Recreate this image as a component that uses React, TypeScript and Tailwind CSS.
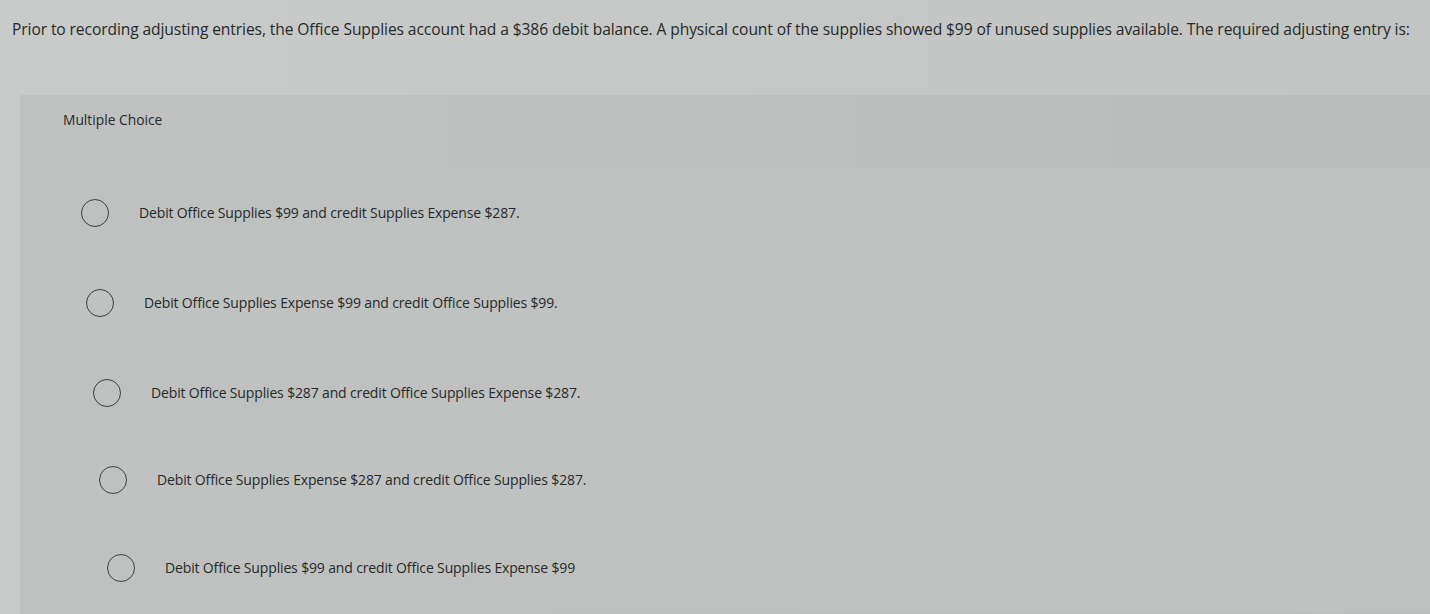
import React from "react";

const options = [
  { text: "Debit Office Supplies $99 and credit Supplies Expense $287.", indent: "ml-[61px]", h: "h-[90px]" },
  { text: "Debit Office Supplies Expense $99 and credit Office Supplies $99.", indent: "ml-[66px]", h: "h-[90px]" },
  { text: "Debit Office Supplies $287 and credit Office Supplies Expense $287.", indent: "ml-[73px]", h: "h-[89px]" },
  { text: "Debit Office Supplies Expense $287 and credit Office Supplies $287.", indent: "ml-[79px]", h: "h-[86px]" },
  { text: "Debit Office Supplies $99 and credit Office Supplies Expense $99", indent: "ml-[87px]", h: "h-[90px]" },
];

function Radio() {
  return (
    <span className="inline-block w-[28px] h-[28px] rounded-full border-[1.5px] border-[#3d3f3f] shrink-0" />
  );
}

export default function App() {
  return (
    <div className="w-[1430px] h-[614px] overflow-hidden bg-gradient-to-r from-[#c9cbca] via-[#c6c8c7] to-[#c2c4c3] text-[#262928] font-['Open_Sans',sans-serif]">
      <div className="h-[95px] pl-[12px] pt-[17px]">
        <p className="text-[15.6px] tracking-[-0.1px] leading-[24px]">
          Prior to recording adjusting entries, the Office Supplies account had a $386 debit balance. A physical count of the supplies showed $99 of unused supplies available. The required adjusting entry is:
        </p>
      </div>
      <div className="ml-[20px] h-[519px] bg-gradient-to-r from-[#c0c2c1] via-[#bdc0bf] to-[#b9bcbb]">
        <div className="pl-[43px] pt-[16px] h-[73px]">
          <p className="text-[13.8px] leading-[18px]">Multiple Choice</p>
        </div>
        <div className="flex flex-col">
          {options.map((o, i) => (
            <div
              key={i}
              className={`flex items-center gap-[30px] ${o.h} ${o.indent} ${i % 2 === 0 ? "bg-[#bec1c0]" : "bg-[#c0c2c1]"}`}
            >
              <Radio />
              <span className="text-[14px] leading-[18px] tracking-[-0.15px]">{o.text}</span>
            </div>
          ))}
        </div>
      </div>
    </div>
  );
}
